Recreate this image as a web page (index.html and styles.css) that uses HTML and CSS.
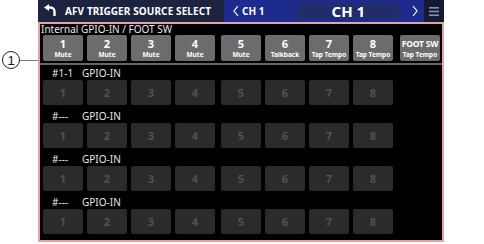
FILE: index.html
```html
<!DOCTYPE html>
<html>
<head>
<meta charset="utf-8">
<link rel="stylesheet" href="styles.css">
</head>
<body>
<div class="page">
  <div class="callout">
    <div class="circle">1</div>
    <div class="leader"></div>
  </div>
  <div class="screen">
    <div class="topbar">
      <div class="titlebox">
        <svg class="back" width="12" height="12" viewBox="0 0 12 12"><polygon points="0,3.5 5,0 5,7" fill="#fff"/><path d="M4 3.5 H6.5 A4 4 0 0 1 10.5 7.5 V12" fill="none" stroke="#fff" stroke-width="2.4"/></svg>
        <span class="title">AFV TRIGGER SOURCE SELECT</span>
      </div>
      <div class="chbar">
        <svg class="chev" width="6" height="12" viewBox="0 0 6 12"><polyline points="5,1 1,6 5,11" fill="none" stroke="#fff" stroke-width="1.2"/></svg>
        <span class="prevname">CH 1</span>
        <div class="chbox">CH 1</div>
        <svg class="chev next" width="6" height="12" viewBox="0 0 6 12"><polyline points="1,1 5,6 1,11" fill="none" stroke="#fff" stroke-width="1.2"/></svg>
      </div>
      <div class="menu">
        <svg width="10" height="9" viewBox="0 0 10 9"><rect x="0" y="0" width="10" height="1.6" fill="#8a8fa8"/><rect x="0" y="3.7" width="10" height="1.6" fill="#8a8fa8"/><rect x="0" y="7.4" width="10" height="1.6" fill="#8a8fa8"/></svg>
      </div>
    </div>
    <div class="frame">
      <div class="section-label">Internal GPIO-IN / FOOT SW</div>
      <div class="btnrow">
        <div class="group">
          <div class="btn"><span class="n">1</span><span class="s">Mute</span></div>
          <div class="btn"><span class="n">2</span><span class="s">Mute</span></div>
          <div class="btn"><span class="n">3</span><span class="s">Mute</span></div>
          <div class="btn"><span class="n">4</span><span class="s">Mute</span></div>
        </div>
        <div class="group">
          <div class="btn"><span class="n">5</span><span class="s">Mute</span></div>
          <div class="btn"><span class="n">6</span><span class="s">Talkback</span></div>
          <div class="btn"><span class="n">7</span><span class="s">Tap Tempo</span></div>
          <div class="btn"><span class="n">8</span><span class="s">Tap Tempo</span></div>
        </div>
        <div class="btn foot"><span class="n sw">FOOT SW</span><span class="s">Tap Tempo</span></div>
      </div>
      <div class="sep"></div>

      <div class="gpio">
        <div class="gpio-label"><span class="id">#1-1</span><span>GPIO-IN</span></div>
        <div class="btnrow">
          <div class="group"><div class="btn dark">1</div><div class="btn dark">2</div><div class="btn dark">3</div><div class="btn dark">4</div></div>
          <div class="group"><div class="btn dark">5</div><div class="btn dark">6</div><div class="btn dark">7</div><div class="btn dark">8</div></div>
        </div>
      </div>
      <div class="gpio">
        <div class="gpio-label"><span class="id">#---</span><span>GPIO-IN</span></div>
        <div class="btnrow">
          <div class="group"><div class="btn dark">1</div><div class="btn dark">2</div><div class="btn dark">3</div><div class="btn dark">4</div></div>
          <div class="group"><div class="btn dark">5</div><div class="btn dark">6</div><div class="btn dark">7</div><div class="btn dark">8</div></div>
        </div>
      </div>
      <div class="gpio">
        <div class="gpio-label"><span class="id">#---</span><span>GPIO-IN</span></div>
        <div class="btnrow">
          <div class="group"><div class="btn dark">1</div><div class="btn dark">2</div><div class="btn dark">3</div><div class="btn dark">4</div></div>
          <div class="group"><div class="btn dark">5</div><div class="btn dark">6</div><div class="btn dark">7</div><div class="btn dark">8</div></div>
        </div>
      </div>
      <div class="gpio">
        <div class="gpio-label"><span class="id">#---</span><span>GPIO-IN</span></div>
        <div class="btnrow">
          <div class="group"><div class="btn dark">1</div><div class="btn dark">2</div><div class="btn dark">3</div><div class="btn dark">4</div></div>
          <div class="group"><div class="btn dark">5</div><div class="btn dark">6</div><div class="btn dark">7</div><div class="btn dark">8</div></div>
        </div>
      </div>
    </div>
  </div>
</div>
</body>
</html>
```
FILE: styles.css
```css
* { box-sizing: border-box; }
html, body { margin: 0; padding: 0; background: #fff; }
body { font-family: "Noto Sans", "Open Sans", sans-serif; width: 484px; height: 244px; overflow: hidden; }

.page { display: flex; align-items: flex-start; }

.callout { width: 38px; display: flex; align-items: center; margin-top: 51px; padding-left: 2px; }
.circle {
  width: 18px; height: 18px; border: 1px solid #222; border-radius: 50%;
  display: flex; align-items: center; justify-content: center;
  font-size: 13px; line-height: 1; color: #111; background: #fff;
  font-family: "Liberation Sans", sans-serif;
}
.leader { flex: 1; height: 1px; background: #777; }

.screen { width: 406px; }

.topbar { height: 22px; display: flex; }
.titlebox {
  width: 186px; background: #1b233e; display: flex; align-items: center;
  padding-left: 6px; gap: 9px;
}
.back { margin-top: -2px; }
.title { color: #fff; font-weight: 700; font-size: 10px; letter-spacing: 0.1px; white-space: nowrap; }

.chbar {
  width: 200px; background: #1d2b8d; display: flex; align-items: center;
  padding-left: 9px; color: #fff;
}
.chev { display: block; }
.prevname { font-weight: 700; font-size: 10px; margin-left: 3px; white-space: nowrap; }
.chbox {
  width: 102px; height: 16px; margin-left: 33px; background: #212c6a;
  display: flex; align-items: center; justify-content: center;
  font-weight: 700; font-size: 15px; line-height: 1;
}
.chev.next { margin-left: 13px; }

.menu { width: 20px; background: #151a33; display: flex; align-items: center; justify-content: center; }

.frame {
  height: 220px; background: #000; border: 2px solid #e2a3a3;
  padding: 0 0 0 3px;
}
.section-label {
  height: 11px; line-height: 11px; font-size: 10px; color: #e8e8e8;
  margin-left: -2px; white-space: nowrap;
}

.btnrow { display: flex; }
.group { display: flex; gap: 4px; }
.group + .group { margin-left: 6px; }
.btn {
  width: 40px; height: 26px; border-radius: 2px; background: #6c6c6c;
  display: flex; flex-direction: column; align-items: center; justify-content: center;
  color: #fff; font-weight: 700; white-space: nowrap;
}
.btn .n { font-size: 11px; line-height: 12px; }
.btn .n.sw { font-size: 8.5px; letter-spacing: -0.2px; }
.btn .s { font-size: 6.5px; line-height: 9px; }
.btn.foot { margin-left: 7px; }

.sep { height: 2px; background: #666; margin: 2px 0 0 -3px; }

.gpio { margin-top: 5px; }
.sep + .gpio { margin-top: 2px; }
.gpio-label {
  height: 13px; line-height: 13px; font-size: 10px; color: #e6e6e6;
  padding-left: 9px; display: flex; white-space: nowrap;
}
.gpio-label .id { width: 30px; }
.btn.dark {
  height: 25px; background: #2b2b2b; color: #525252; font-size: 11px; font-weight: 700;
}
```
